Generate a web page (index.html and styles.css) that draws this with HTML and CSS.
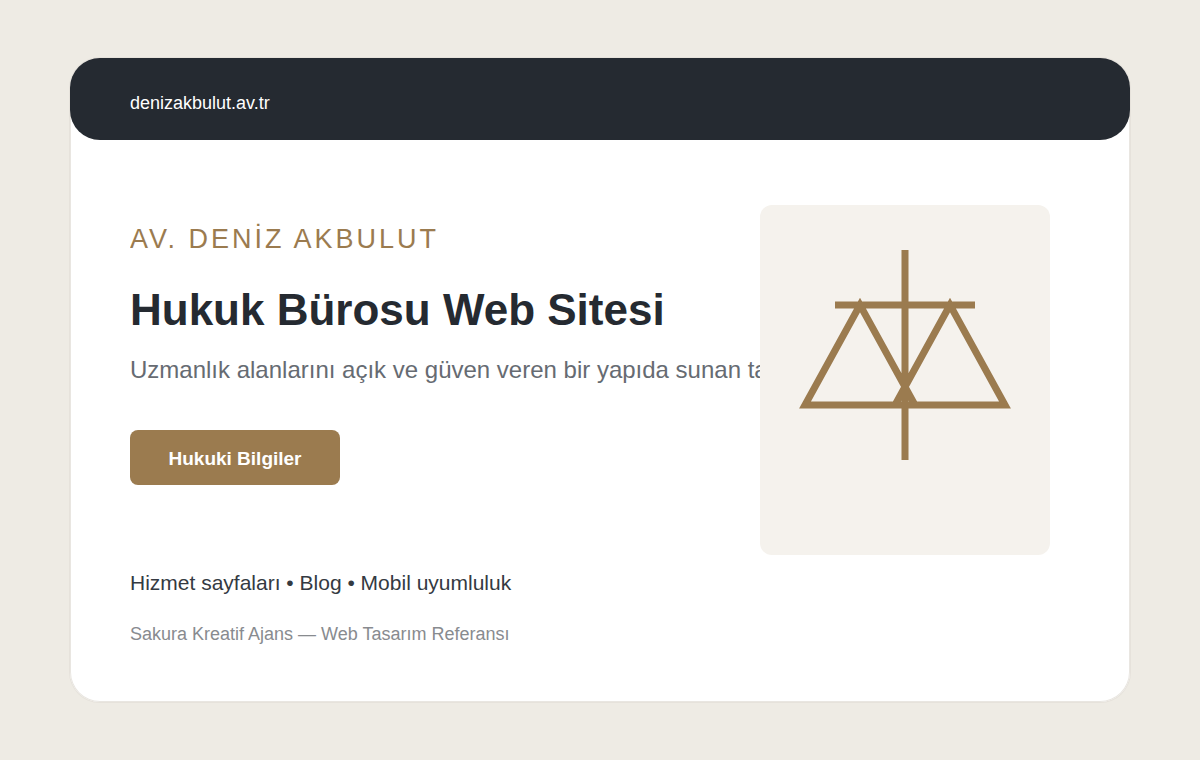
FILE: index.html
```html
<!DOCTYPE html>
<html lang="tr">
<head>
    <meta charset="UTF-8">
    <meta name="viewport" content="width=device-width, initial-scale=1.0">
    <title>Av. Deniz Akbulut</title>
    <link rel="stylesheet" href="styles.css">
</head>
<body>
    <div class="card">
        <header class="top-bar">
            <a href="#">denizakbulut.av.tr</a>
        </header>

        <main class="hero">
            <div class="intro">
                <p class="brand">AV. DENİZ AKBULUT</p>
                <h1>Hukuk Bürosu Web Sitesi</h1>
                <p class="lead">Uzmanlık alanlarını açık ve güven veren bir yapıda sunan tanıtım</p>
                <button type="button" class="info-btn">Hukuki Bilgiler</button>
            </div>

            <!-- terazi -->
            <div class="visual">
                <svg viewBox="0 0 290 350" fill="none" stroke="#9b7b4f" stroke-width="7" aria-hidden="true">
                    <path d="M145 45V255M75 100H215M100 100L45 200H155ZM190 100L135 200H245Z"/>
                </svg>
            </div>
        </main>

        <footer class="bottom">
            <p class="features">Hizmet sayfaları • Blog • Mobil uyumluluk</p>
            <p class="credit">Sakura Kreatif Ajans — Web Tasarım Referansı</p>
        </footer>
    </div>
</body>
</html>
```
FILE: styles.css
```css
* {
    box-sizing: border-box;
}

body {
    margin: 0;
    padding: 58px 70px;
    background-color: #eeebe4;
    font-family: Arial, "Liberation Sans", sans-serif;
    color: #252a31;
}

h1, p {
    margin: 0;
}

.card {
    background-color: white;
    border-radius: 30px;
    box-shadow: 0 0 0 1px #e6e2db, inset 0 0 0 1px #e9e6e1;
    padding-bottom: 56px;
}

.top-bar {
    background-color: #252a31;
    border-radius: 30px;
    padding: 33px 60px 25px;
    line-height: 24px;
}

.top-bar a {
    display: block;
    color: white;
    font-size: 18px;
    text-decoration: none;
}

.hero {
    display: grid;
    grid-template-columns: minmax(0, 1fr) 290px;
    padding: 65px 80px 0 60px;
}

.intro {
    padding-top: 16px;
    overflow: hidden;
}

.brand {
    color: #9b7b4f;
    font-size: 27px;
    line-height: 36px;
    letter-spacing: 3px;
}

h1 {
    margin-top: 27px;
    font-size: 44px;
    line-height: 52px;
}

.lead {
    margin-top: 18px;
    color: #666b72;
    font-size: 24px;
    line-height: 32px;
    white-space: nowrap;
}

.info-btn {
    display: block;
    width: 210px;
    height: 55px;
    margin-top: 44px;
    padding: 2px 0 0;
    border: none;
    border-radius: 8px;
    background-color: #9b7b4f;
    color: white;
    font-family: inherit;
    font-size: 19px;
    font-weight: bold;
    cursor: pointer;
}

.visual {
    background-color: #f5f2ed;
    border-radius: 12px;
}

.visual svg {
    display: block;
    width: 100%;
}

.bottom {
    padding: 14px 60px 0;
}

.features {
    color: #343a42;
    font-size: 21px;
    line-height: 28px;
}

.credit {
    margin-top: 25px;
    color: #888b8f;
    font-size: 18px;
    line-height: 24px;
}
```
